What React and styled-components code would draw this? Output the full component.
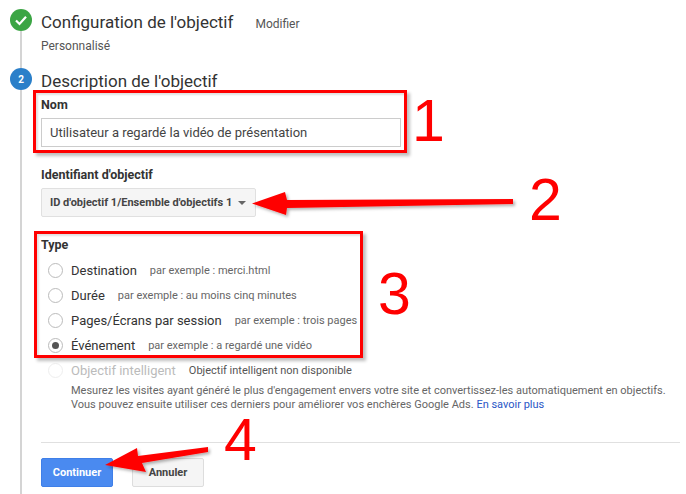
import React from "react";
import styled, { createGlobalStyle } from "styled-components";

const GlobalStyle = createGlobalStyle`
  html, body {
    margin: 0;
    padding: 0;
    background: #fff;
  }
  body {
    font-family: Roboto, "Liberation Sans", sans-serif;
    color: #333;
    overflow: hidden;
  }
`;

const Page = styled.div`
  position: relative;
  width: 686px;
  height: 494px;
  overflow: hidden;
  box-sizing: border-box;
  padding: 9px 6px 0 10px;
`;

const Step = styled.section`
  display: flex;
  gap: 9px;
  height: ${(p) => p.$height}px;
`;

const Rail = styled.div`
  width: 22px;
  flex: none;
  display: flex;
  flex-direction: column;
  align-items: flex-start;
`;

const RailLine = styled.div`
  flex: 1;
  width: 2px;
  margin-left: 10px;
  background: #d4d4d4;
`;

const Bullet = styled.div`
  width: 22px;
  height: 22px;
  flex: none;
  border-radius: 50%;
  background: ${(p) => p.$color};
  color: #fff;
  font-size: 10px;
  font-weight: 700;
  display: flex;
  align-items: center;
  justify-content: center;
`;

const StepBody = styled.div`
  flex: 1;
  min-width: 0;
`;

const TitleRow = styled.div`
  display: flex;
  align-items: baseline;
  height: 26px;
`;

const StepTitle = styled.h2`
  margin: 0;
  font-size: 17px;
  line-height: 26px;
  font-weight: 400;
  color: #333;
`;

const EditLink = styled.span`
  margin-left: 22px;
  font-size: 12px;
  color: #555;
`;

const Summary = styled.div`
  margin-top: 3px;
  font-size: 12px;
  line-height: 16px;
  color: #555;
`;

const FieldLabel = styled.div`
  margin-top: ${(p) => p.$top || 0}px;
  font-size: 12.5px;
  line-height: 16px;
  font-weight: 700;
  color: #333;
`;

const NameField = styled.div`
  margin: 5px 0 20px;
  box-sizing: border-box;
  width: 360px;
  height: 29px;
  padding: 0 8px;
  border: 1px solid #ccc;
  display: flex;
  align-items: center;
  font-size: 13px;
  color: #444;
`;

const Dropdown = styled.div`
  margin: 5px 0 20px;
  box-sizing: border-box;
  width: 215px;
  height: 29px;
  padding: 0 8px;
  background: #f5f5f5;
  border: 1px solid #e0e0e0;
  border-radius: 2px;
  display: flex;
  align-items: center;
  justify-content: space-between;
  font-size: 11px;
  font-weight: 700;
  color: #444;
`;

const Caret = styled.span`
  width: 0;
  height: 0;
  margin-right: 1px;
  border-left: 4px solid transparent;
  border-right: 4px solid transparent;
  border-top: 4px solid #666;
`;

const RadioList = styled.div`
  margin-top: 5px;
  display: flex;
  flex-direction: column;
  padding-left: 7px;
`;

const RadioRow = styled.div`
  height: 25px;
  display: flex;
  align-items: center;
`;

const RadioCircle = styled.span`
  box-sizing: border-box;
  width: 15px;
  height: 15px;
  flex: none;
  margin-right: 8px;
  border-radius: 50%;
  border: 1px solid ${(p) => (p.$disabled ? "#eee" : "#bbb")};
  display: flex;
  align-items: center;
  justify-content: center;
  &::after {
    content: "";
    display: ${(p) => (p.$checked ? "block" : "none")};
    width: 7px;
    height: 7px;
    border-radius: 50%;
    background: #555;
  }
`;

const RadioLabel = styled.span`
  font-size: 13px;
  color: ${(p) => (p.$disabled ? "#bbb" : "#333")};
`;

const RadioHint = styled.span`
  margin-left: 13px;
  font-size: 11px;
  color: ${(p) => (p.$disabled ? "#555" : "#666")};
`;

const HelpText = styled.p`
  margin: 1px 0 0 30px;
  font-size: 11px;
  line-height: 14px;
  color: #666;
  white-space: nowrap;
`;

const HelpLink = styled.a`
  color: #2a56c6;
  text-decoration: none;
`;

const Divider = styled.hr`
  margin: 30px 0 15px;
  border: 0;
  height: 1px;
  background: #e0e0e0;
`;

const Actions = styled.div`
  display: flex;
  gap: 19px;
`;

const Button = styled.button`
  box-sizing: border-box;
  width: ${(p) => p.$width}px;
  height: 29px;
  padding: 0;
  border-radius: 2px;
  border: 1px solid ${(p) => (p.$primary ? "#3f7fe8" : "#ddd")};
  background: ${(p) => (p.$primary ? "#4a8af0" : "#f5f5f5")};
  color: ${(p) => (p.$primary ? "#fff" : "#444")};
  font-family: inherit;
  font-size: 11px;
  font-weight: 700;
`;

const RedBox = styled.div`
  position: absolute;
  box-sizing: border-box;
  left: ${(p) => p.$x}px;
  top: ${(p) => p.$y}px;
  width: ${(p) => p.$w}px;
  height: ${(p) => p.$h}px;
  border: 3px solid #f00;
  box-shadow: 3px 3px 3px rgba(0, 0, 0, 0.25), inset 2px 2px 2px rgba(0, 0, 0, 0.12);
`;

const Numeral = styled.span`
  position: absolute;
  left: ${(p) => p.$x}px;
  top: ${(p) => p.$y}px;
  font-family: "Liberation Sans", Arial, sans-serif;
  font-size: 59px;
  line-height: 59px;
  color: #f00;
`;

const ArrowLayer = styled.svg`
  position: absolute;
  left: 0;
  top: 0;
  pointer-events: none;
`;

const types = [
  { label: "Destination", hint: "par exemple : merci.html" },
  { label: "Durée", hint: "par exemple : au moins cinq minutes" },
  { label: "Pages/Écrans par session", hint: "par exemple : trois pages" },
  { label: "Événement", hint: "par exemple : a regardé une vidéo", checked: true },
  { label: "Objectif intelligent", hint: "Objectif intelligent non disponible", disabled: true },
];

export default function App() {
  return (
    <Page>
      <GlobalStyle />
      <Step $height={59}>
        <Rail>
          <Bullet $color="#3ba544">
            <svg width="14" height="14" viewBox="0 0 14 14" fill="none">
              <path d="M2 7.5 L5.5 11 L12 3.8" stroke="#fff" strokeWidth="2.2" />
            </svg>
          </Bullet>
          <RailLine />
        </Rail>
        <StepBody>
          <TitleRow>
            <StepTitle>Configuration de l'objectif</StepTitle>
            <EditLink>Modifier</EditLink>
          </TitleRow>
          <Summary>Personnalisé</Summary>
        </StepBody>
      </Step>
      <Step $height={426}>
        <Rail>
          <Bullet $color="#2a7fc9">2</Bullet>
          <RailLine />
        </Rail>
        <StepBody>
          <TitleRow>
            <StepTitle>Description de l'objectif</StepTitle>
          </TitleRow>
          <FieldLabel $top={3}>Nom</FieldLabel>
          <NameField>Utilisateur a regardé la vidéo de présentation</NameField>
          <FieldLabel>Identifiant d'objectif</FieldLabel>
          <Dropdown>
            ID d'objectif 1/Ensemble d'objectifs 1
            <Caret />
          </Dropdown>
          <FieldLabel>Type</FieldLabel>
          <RadioList>
            {types.map((t) => (
              <RadioRow key={t.label}>
                <RadioCircle $checked={t.checked} $disabled={t.disabled} />
                <RadioLabel $disabled={t.disabled}>{t.label}</RadioLabel>
                <RadioHint $disabled={t.disabled}>{t.hint}</RadioHint>
              </RadioRow>
            ))}
          </RadioList>
          <HelpText>
            Mesurez les visites ayant généré le plus d'engagement envers votre site et convertissez-les automatiquement en objectifs.
            <br />
            Vous pouvez ensuite utiliser ces derniers pour améliorer vos enchères Google Ads. <HelpLink>En savoir plus</HelpLink>
          </HelpText>
          <Divider />
          <Actions>
            <Button $primary $width={72}>Continuer</Button>
            <Button $width={72}>Annuler</Button>
          </Actions>
        </StepBody>
      </Step>

      <RedBox $x={33} $y={90} $w={374} $h={63} />
      <RedBox $x={34} $y={231} $w={329} $h={127} />
      <Numeral $x={412} $y={92}>1</Numeral>
      <Numeral $x={529} $y={171}>2</Numeral>
      <Numeral $x={378} $y={265}>3</Numeral>
      <Numeral $x={224} $y={411}>4</Numeral>

      <ArrowLayer width="686" height="494">
        <defs>
          <filter id="arrowShadow" x="-10%" y="-30%" width="120%" height="170%">
            <feDropShadow dx="2" dy="2" stdDeviation="1.5" floodColor="#000" floodOpacity="0.3" />
          </filter>
        </defs>
        <g filter="url(#arrowShadow)" fill="#f00">
          <path d="M252 203.5 L285 192 L287 200 L513 199 L513 204 L287 208 L286 215 Z" />
          <path d="M105 465 L137 448 L138 456 L208 447 L208 452 L142 463 L146 472 Z" />
        </g>
      </ArrowLayer>
    </Page>
  );
}
